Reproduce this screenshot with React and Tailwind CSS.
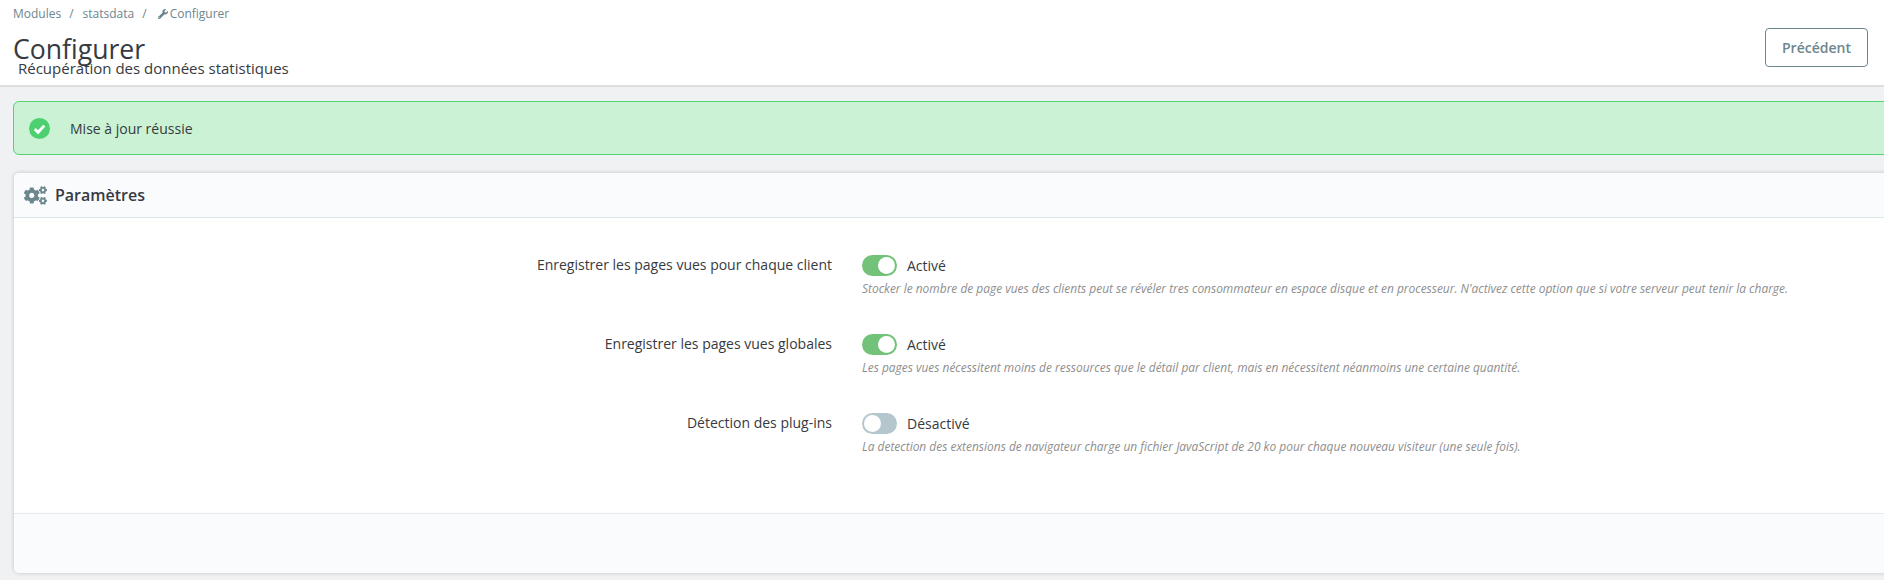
import React from 'react';
import { FaWrench, FaCogs } from 'react-icons/fa';

const rows = [
  {
    label: 'Enregistrer les pages vues pour chaque client',
    on: true,
    help: "Stocker le nombre de page vues des clients peut se révéler tres consommateur en espace disque et en processeur. N'activez cette option que si votre serveur peut tenir la charge.",
  },
  {
    label: 'Enregistrer les pages vues globales',
    on: true,
    help: 'Les pages vues nécessitent moins de ressources que le détail par client, mais en nécessitent néanmoins une certaine quantité.',
  },
  {
    label: 'Détection des plug-ins',
    on: false,
    help: 'La detection des extensions de navigateur charge un fichier JavaScript de 20 ko pour chaque nouveau visiteur (une seule fois).',
  },
];

const Toggle = ({ on }) => (
  <span className={`relative block w-[35px] h-[21px] rounded-full ${on ? 'bg-[#72c279]' : 'bg-[#b3c7cd]'}`}>
    <span className={`absolute top-[2px] w-[17px] h-[17px] rounded-full bg-white ${on ? 'left-[16px]' : 'left-[2px]'}`} />
  </span>
);

const App = () => {
  return (
    <div className="w-[1884px] h-[580px] overflow-hidden bg-[#eff1f2] text-[#363a41] font-['Open_Sans',sans-serif]">
      <header className="h-[87px] bg-white border-b-2 border-[#dfdfe0] px-[13px] flex justify-between">
        <div>
          <nav className="flex items-center h-[14px] mt-[7px] text-[12px] text-[#6c868e]">
            <span>Modules</span>
            <span className="ml-[8px] mr-[9px]">/</span>
            <span>statsdata</span>
            <span className="ml-[8px] mr-[11px]">/</span>
            <FaWrench className="w-[10px] h-[10px] mr-[2px]" />
            <span>Configurer</span>
          </nav>
          <h1 className="text-[26.6px] leading-[38px] mt-[9px]">Configurer</h1>
          <p className="text-[15px] leading-[20px] mt-[-10px] ml-[5px]">Récupération des données statistiques</p>
        </div>
        <button className="self-start mt-[28px] mr-[3px] w-[103px] h-[39px] bg-white border border-[#6c868e] rounded-[4px] text-[14px] font-semibold text-[#6c868e]">
          Précédent
        </button>
      </header>

      <div className="w-[1900px] ml-[13px] mt-[14px]">
        <div className="h-[54px] flex items-center bg-[#cbf2d4] border border-[#53d572] rounded-[6px] text-[14px]">
          <svg viewBox="0 0 22 22" className="w-[21px] h-[21px] ml-[15px]">
            <circle cx="11" cy="11" r="11" fill="#4cd070" />
            <path d="M6 11.5l3.5 3.5 6.5-7" fill="none" stroke="#fff" strokeWidth="3" />
          </svg>
          <span className="ml-[20px]">Mise à jour réussie</span>
        </div>

        <section className="mt-[18px] ml-[1px] h-[400px] bg-white rounded-[5px] shadow-[0_0_4px_0_rgba(0,0,0,0.2)] flex flex-col">
          <div className="h-[45px] shrink-0 flex items-center bg-[#fafbfc] border-b border-[#dbe6e9] rounded-t-[5px] px-[10px]">
            <FaCogs className="w-[23px] h-[23px] text-[#6c868e]" />
            <h2 className="ml-[8px] text-[16px] font-semibold">Paramètres</h2>
          </div>
          <div className="flex-1 pt-[37px]">
            {rows.map((row) => (
              <div key={row.label} className="flex h-[79px]">
                <label className="w-[818px] text-right text-[14px] leading-[19px]">{row.label}</label>
                <div className="ml-[30px]">
                  <div className="flex items-center h-[21px]">
                    <Toggle on={row.on} />
                    <span className="ml-[10px] text-[14px]">{row.on ? 'Activé' : 'Désactivé'}</span>
                  </div>
                  <p className="mt-[5px] text-[11.95px] leading-[16px] italic text-[#8e8e8e]">{row.help}</p>
                </div>
              </div>
            ))}
          </div>
          <div className="h-[60px] shrink-0 bg-[#fafbfc] border-t border-[#e6eaec] rounded-b-[5px]" />
        </section>
      </div>
    </div>
  );
};

export default App;
